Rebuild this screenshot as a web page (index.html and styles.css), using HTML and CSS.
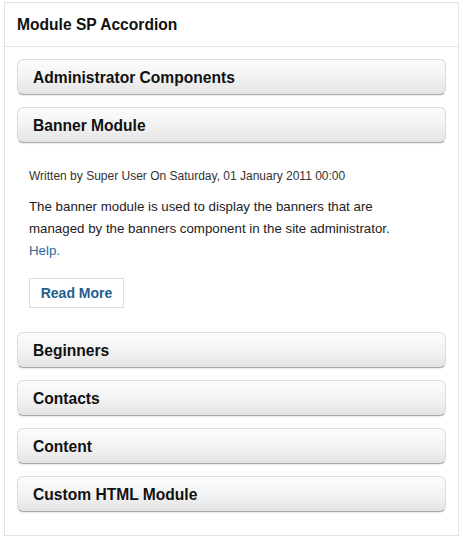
FILE: index.html
```html
<!DOCTYPE html>
<html>
<head>
<meta charset="utf-8">
<link rel="stylesheet" href="styles.css">
</head>
<body>
<div class="module">
  <h3 class="module-title">Module SP Accordion</h3>
  <div class="module-body">
    <div class="acc-item"><span>Administrator Components</span></div>
    <div class="acc-item"><span>Banner Module</span></div>
    <div class="acc-content">
      <div class="meta">Written by Super User On Saturday, 01 January 2011 00:00</div>
      <p class="text">The banner module is used to display the banners that are managed by the banners component in the site administrator. <a href="#" class="link">Help.</a></p>
      <a href="#" class="readmore">Read More</a>
    </div>
    <div class="acc-item"><span>Beginners</span></div>
    <div class="acc-item"><span>Contacts</span></div>
    <div class="acc-item"><span>Content</span></div>
    <div class="acc-item"><span>Custom HTML Module</span></div>
  </div>
</div>
</body>
</html>
```
FILE: styles.css
```css
html, body {
  margin: 0;
  padding: 0;
  background: #ffffff;
}
body {
  font-family: "Liberation Sans", Arial, sans-serif;
  color: #111;
}
.module {
  margin: 2px 0 0 4px;
  width: 453px;
  height: 532px;
  border: 1px solid #e2e2e2;
  background: #fff;
  box-sizing: content-box;
  display: flex;
  flex-direction: column;
}
.module-title {
  margin: 0;
  height: 44px;
  box-sizing: border-box;
  padding: 12px 12px 0 12px;
  font-size: 15.6px;
  line-height: 20px;
  font-weight: bold;
  color: #111;
  border-bottom: 1px solid #e4e4e4;
}
.module-body {
  padding: 12px 12px 0 12px;
  display: flex;
  flex-direction: column;
  gap: 12px;
}
.acc-item {
  height: 36px;
  box-sizing: border-box;
  border: 1px solid #dcdcdc;
  border-bottom-color: #a9a9a9;
  border-radius: 6px;
  background: linear-gradient(to bottom, #fcfcfc 0%, #f3f3f3 50%, #e4e4e4 100%);
  box-shadow: 0 1px 1px rgba(0,0,0,0.08);
  padding: 1px 15px 0 15px;
  display: flex;
  align-items: center;
  font-size: 15.6px;
  font-weight: bold;
  color: #111;
}
.acc-content {
  padding: 12px 12px 12px 12px;
  display: flex;
  flex-direction: column;
  align-items: flex-start;
}
.meta {
  font-size: 12px;
  line-height: 18px;
  color: #333;
}
.text {
  margin: 11px 0 0 0;
  max-width: 395px;
  font-size: 13.3px;
  line-height: 22px;
  color: #222;
}
.link {
  color: #2a6a9e;
  text-decoration: none;
}
.readmore {
  margin-top: 16px;
  display: flex;
  align-items: center;
  justify-content: center;
  width: 95px;
  height: 30px;
  box-sizing: border-box;
  border: 1px solid #dddddd;
  font-size: 14px;
  font-weight: bold;
  color: #1d5f8e;
  text-decoration: none;
}
```
